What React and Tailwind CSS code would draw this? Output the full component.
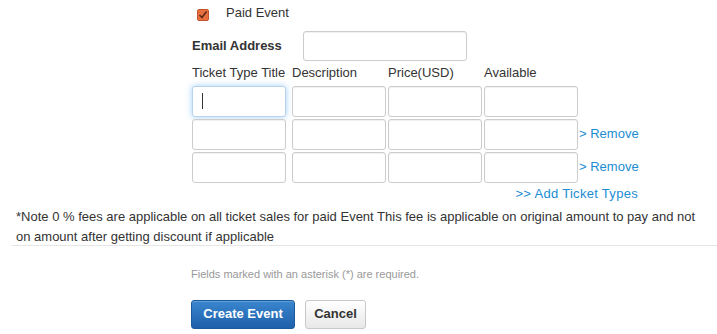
import React from 'react';

function Field({ focus, className = '' }) {
  return (
    <div
      className={
        'h-[31px] w-[94px] rounded-[3px] border bg-white ' +
        (focus
          ? 'border-[#b9d3ee] shadow-[0_0_6px_rgba(82,168,236,0.55)] flex items-center pl-[9px] '
          : 'border-[#cccccc] shadow-[inset_0_1px_1px_rgba(0,0,0,0.06)] ') +
        className
      }
    >
      {focus && <span className="block h-[16px] w-px bg-[#333]" />}
    </div>
  );
}

function TicketRow({ first, remove }) {
  return (
    <div className="flex h-[33px] items-start">
      <Field focus={first} />
      <Field className="ml-[6px]" />
      <Field className="ml-[2px]" />
      <Field className="ml-[2px]" />
      {remove && (
        <a className="ml-[1px] mt-[5px] text-[13px] text-[#1b8dd3]">&gt; Remove</a>
      )}
    </div>
  );
}

export default function App() {
  return (
    <div className="relative h-[334px] w-[717px] overflow-hidden bg-white text-[13px] text-[#333] font-['Liberation_Sans',Arial,sans-serif]">
      <div className="flex items-center pl-[197px] pt-[3px]">
        <span className="mt-[5px] flex h-[12px] w-[12px] items-center justify-center rounded-[2px] border border-[#c4552e] bg-[#e8703f]">
          <svg width="10" height="10" viewBox="0 0 10 10">
            <path d="M1.5 5 L4 7.5 L8.5 1.5" fill="none" stroke="#5a2a18" strokeWidth="1.6" />
          </svg>
        </span>
        <span className="ml-[17px]">Paid Event</span>
      </div>

      <div className="mt-[8px] flex items-center pl-[192px]">
        <label className="w-[111px] font-bold">Email Address</label>
        <input className="h-[30px] w-[164px] rounded-[3px] border border-[#cccccc] bg-white shadow-[inset_0_1px_1px_rgba(0,0,0,0.06)] outline-none" />
      </div>

      <div className="pl-[192px] pt-[1px]">
        <div className="flex h-[22px] items-center">
          <span className="w-[100px] whitespace-nowrap">Ticket Type Title</span>
          <span className="w-[96px]">Description</span>
          <span className="w-[96px]">Price(USD)</span>
          <span>Available</span>
        </div>
        <div className="pt-[2px]">
          <TicketRow first />
          <TicketRow remove />
          <TicketRow remove />
        </div>
        <div className="-mt-[1px] flex w-[446px] justify-end">
          <a className="text-[13px] tracking-[0.3px] text-[#1b8dd3]">&gt;&gt; Add Ticket Types</a>
        </div>
      </div>

      <div className="ml-[12px] mt-[4px]">
        <div className="pl-[4px] pr-[20px] leading-[20px]">
          *Note 0 % fees are applicable on all ticket sales for paid Event This fee is applicable on original amount to pay and not on amount after getting discount if applicable
        </div>
        <div className="-mt-[2px] h-px bg-[#e5e5e5]" />
      </div>

      <div className="pl-[191px] pt-[20px] text-[11px] text-[#999]">
        Fields marked with an asterisk (*) are required.
      </div>

      <div className="flex gap-[10px] pl-[191px] pt-[17px]">
        <button className="h-[29px] w-[104px] rounded-[3px] border border-[#1d5a9c] bg-gradient-to-b from-[#3a86cf] to-[#1f60aa] font-bold text-white shadow-[inset_0_1px_0_rgba(255,255,255,0.2)]">
          Create Event
        </button>
        <button className="h-[29px] w-[61px] rounded-[3px] border border-[#c8c8c8] bg-gradient-to-b from-white to-[#e8e8e8] font-bold text-[#333]">
          Cancel
        </button>
      </div>
    </div>
  );
}
